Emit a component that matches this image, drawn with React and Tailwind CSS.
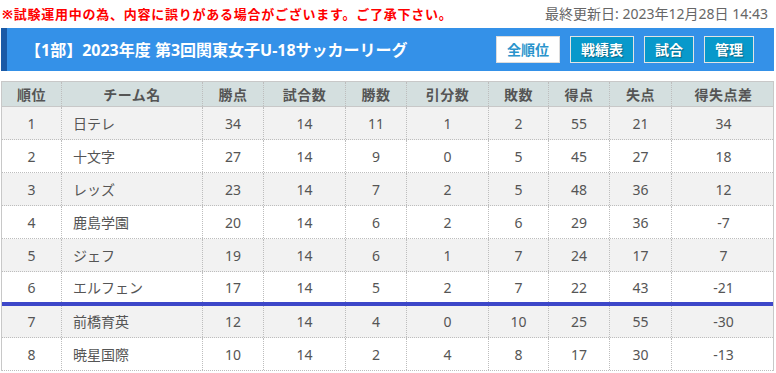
import React from "react";

const rows = [
  ["1", "日テレ", 34, 14, 11, 1, 2, 55, 21, 34],
  ["2", "十文字", 27, 14, 9, 0, 5, 45, 27, 18],
  ["3", "レッズ", 23, 14, 7, 2, 5, 48, 36, 12],
  ["4", "鹿島学園", 20, 14, 6, 2, 6, 29, 36, -7],
  ["5", "ジェフ", 19, 14, 6, 1, 7, 24, 17, 7],
  ["6", "エルフェン", 17, 14, 5, 2, 7, 22, 43, -21],
  ["7", "前橋育英", 12, 14, 4, 0, 10, 25, 55, -30],
  ["8", "暁星国際", 10, 14, 2, 4, 8, 17, 30, -13],
];

const heads = ["順位", "チーム名", "勝点", "試合数", "勝数", "引分数", "敗数", "得点", "失点", "得失点差"];

const grid = "grid grid-cols-[60px_141px_61px_82px_61px_82px_60px_61px_62px_103px]";

export default function App() {
  return (
    <div
      className="w-[776px] h-[373px] bg-white overflow-hidden"
      style={{ fontFamily: '"Noto Sans", "Noto Sans CJK JP", sans-serif' }}
    >
      <div className="h-[28px] flex items-center justify-between pl-[2px] pr-[8px]">
        <span className="text-[13px] font-bold text-[#ff0000] leading-none tracking-[0.75px]">
          ※試験運用中の為、内容に誤りがある場合がございます。ご了承下さい。
        </span>
        <span className="text-[14px] text-[#666] leading-none">最終更新日: 2023年12月28日 14:43</span>
      </div>
      <div className="ml-[1px] w-[773px] h-[43px] bg-[#3491e8] border-l-[6px] border-[#1b5aa6] flex items-center justify-between pl-[18px] pr-[20px]">
        <span className="text-white font-bold text-[16px] leading-none">
          【1部】2023年度 第3回関東女子U-18サッカーリーグ
        </span>
        <div className="flex gap-[10px]">
          <span className="h-[27px] px-[10px] flex items-center bg-white border border-[#dcdcdc] text-[#2a94cc] font-bold text-[14px] leading-none">
            全順位
          </span>
          {["戦績表", "試合", "管理"].map((t) => (
            <span
              key={t}
              className="h-[27px] px-[10px] flex items-center bg-[#0899cb] border border-[#e3e3e3] text-white font-bold text-[14px] leading-none [text-shadow:1px_1px_1px_rgba(0,0,0,0.35)]"
            >
              {t}
            </span>
          ))}
        </div>
      </div>
      <div className="mt-[10px] ml-[1px] w-[773px] border-x border-[#c8c8c8]">
        <div className={`${grid} h-[26px] bg-[#d4dfdf] border-y border-[#c8c8c8]`}>
          {heads.map((h, i) => (
            <div
              key={h}
              className={`flex items-center justify-center text-[14px] font-bold text-[#555] tracking-[0.5px] ${i < 9 ? "border-r border-dotted border-[#bdbdbd]" : ""}`}
            >
              {h}
            </div>
          ))}
        </div>
        {rows.map((r, ri) => (
          <div
            key={ri}
            className={`${grid} ${ri % 2 === 0 ? "bg-[#f2f2f2]" : "bg-white"} ${
              ri === 5 ? "h-[34px] border-b-[4px] border-[#3d47c9]" : ri === 6 ? "h-[32px] border-b border-dotted border-[#bdbdbd]" : "h-[33px] border-b border-dotted border-[#bdbdbd]"
            }`}
          >
            {r.map((c, i) => (
              <div
                key={i}
                className={`flex items-center text-[14px] text-[#555] ${i === 1 ? "justify-start pl-[11px]" : "justify-center"} ${
                  i < 9 ? "border-r border-dotted border-[#bdbdbd]" : ""
                }`}
              >
                {c}
              </div>
            ))}
          </div>
        ))}
      </div>
    </div>
  );
}
